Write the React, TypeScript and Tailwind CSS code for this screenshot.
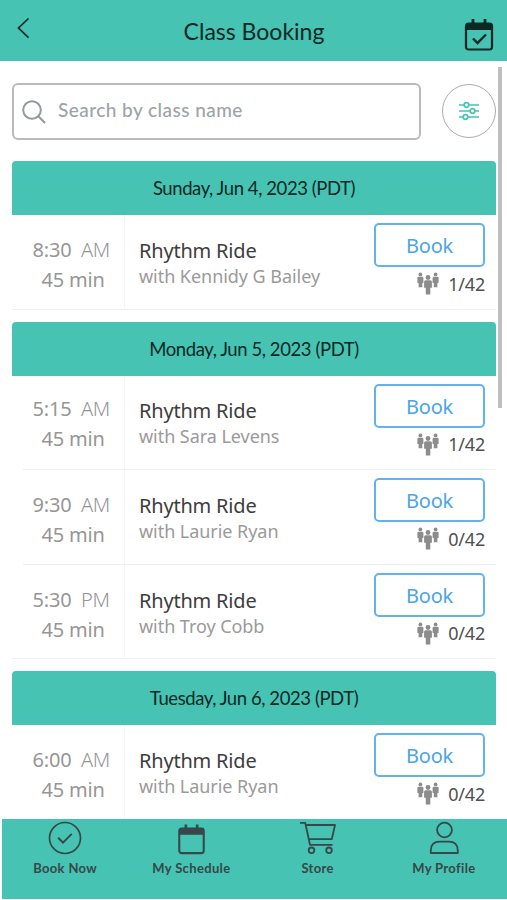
import { clsx } from "clsx";

type ClassItem = {
  time: string;
  period: string;
  teacher: string;
  spots: string;
};

type Day = {
  label: string;
  classes: ClassItem[];
};

const days: Day[] = [
  {
    label: "Sunday, Jun 4, 2023 (PDT)",
    classes: [{ time: "8:30", period: "AM", teacher: "Kennidy G Bailey", spots: "1/42" }],
  },
  {
    label: "Monday, Jun 5, 2023 (PDT)",
    classes: [
      { time: "5:15", period: "AM", teacher: "Sara Levens", spots: "1/42" },
      { time: "9:30", period: "AM", teacher: "Laurie Ryan", spots: "0/42" },
      { time: "5:30", period: "PM", teacher: "Troy Cobb", spots: "0/42" },
    ],
  },
  {
    label: "Tuesday, Jun 6, 2023 (PDT)",
    classes: [{ time: "6:00", period: "AM", teacher: "Laurie Ryan", spots: "0/42" }],
  },
];

function CalendarIcon({ checked = false, className }: { checked?: boolean; className?: string }) {
  return (
    <svg viewBox="0 0 30 34" className={className} fill="none" stroke="currentColor">
      <rect x="2" y="6" width="26" height="26" rx="2.5" strokeWidth="2.2" />
      <path d="M2 6h26v6.5H2z" fill="currentColor" stroke="none" />
      <path d="M9 1.5v6M21 1.5v6" strokeWidth="2.8" />
      {checked && <path d="M9 21l4.5 4.5 8.5-8.5" strokeWidth="2.4" />}
    </svg>
  );
}

function PeopleIcon() {
  return (
    <svg viewBox="0 0 22 23" className="h-[23px] w-[22px]" fill="#8c8c8c">
      <circle cx="3.4" cy="2.4" r="1.9" />
      <path d="M.4 6q0-1.3 1.3-1.3h3.4q1.3 0 1.3 1.3v5H5.3v4.2H1.6V11H.4z" />
      <circle cx="18.6" cy="2.4" r="1.9" />
      <path d="M15.6 6q0-1.3 1.3-1.3h3.4q1.3 0 1.3 1.3v5h-1.2v4.2h-3.6V11h-1.2z" />
      <circle cx="11" cy="5.5" r="2.4" />
      <path d="M7.1 9.8q0-1.5 1.5-1.5h4.8q1.5 0 1.5 1.5v6h-1.6v6.6H8.8v-6.6H7.1z" />
    </svg>
  );
}

function ClassRow({ item, tight, last }: { item: ClassItem; tight: boolean; last: boolean }) {
  return (
    <div className="relative flex h-[94.6px] font-['Noto_Sans','Open_Sans',sans-serif]">
      <div
        className={clsx(
          "w-[113px] border-r border-[#f4f5f6] text-[20px] leading-[30px] text-[#969696]",
          tight ? "pt-[18.5px]" : "pt-[20px]",
        )}
      >
        <div className="flex pl-[20.5px]">
          <span className="w-[48.5px] tracking-[-0.2px]">{item.time}</span>
          <span className="font-light tracking-[-0.3px] text-[#949494]">{item.period}</span>
        </div>
        <div className="pl-[29.5px] tracking-[-0.2px]">45 min</div>
      </div>
      <div className={clsx("flex-1 pl-[14px] whitespace-nowrap", tight ? "pt-[22px]" : "pt-[23px]")}>
        <div className="text-[20px] leading-[26px] tracking-[-0.2px] text-[#3d3d3d]">Rhythm Ride</div>
        <div className="text-[18px] leading-[24px] tracking-[-0.05px] text-[#9a9a9a]">with {item.teacher}</div>
      </div>
      <div className="mr-[11px] w-[111px] pt-[8px]">
        <button className="block h-[44px] w-full rounded-[5px] border-2 border-[#62b2ec] pt-[1px] text-[20px] leading-[39px] tracking-[-0.2px] text-[#4ba5e5]">
          Book
        </button>
        <div className="mt-[3.5px] flex items-center justify-end gap-[9px] text-[18px] leading-[26px] text-[#505050]">
          <PeopleIcon />
          <span className="tracking-[-0.2px]">{item.spots}</span>
        </div>
      </div>
      <div className={clsx("absolute right-0 bottom-0 h-px bg-[#eceeef]", last ? "left-0" : "left-[11px]")} />
    </div>
  );
}

const navItems = [
  {
    label: "Book Now",
    icon: (
      <svg viewBox="0 0 34 34" className="h-[34px] w-[34px]" fill="none" stroke="currentColor" strokeWidth="1.7">
        <circle cx="17" cy="17" r="15.5" />
        <path d="M10.2 16.8l4.8 4.8 8.7-8.7" strokeWidth="2" />
      </svg>
    ),
  },
  { label: "My Schedule", icon: <CalendarIcon className="mt-[2px] h-[32px] w-[29px]" /> },
  {
    label: "Store",
    icon: (
      <svg viewBox="0 0 38 34" className="h-[34px] w-[38px]" fill="none" stroke="currentColor" strokeWidth="1.8">
        <path d="M1 1.8h5.2L11 23.8h22.5M7 4h29l-3.2 14.2H10" strokeLinejoin="round" />
        <circle cx="12.5" cy="29.3" r="2.8" />
        <circle cx="30" cy="29.3" r="2.8" />
      </svg>
    ),
  },
  {
    label: "My Profile",
    icon: (
      <svg viewBox="0 0 30 34" className="h-[34px] w-[30px]" fill="none" stroke="currentColor" strokeWidth="1.8">
        <circle cx="15.5" cy="9" r="7.4" />
        <path d="M1.8 32v-2.5q0-8.8 9-8.8h9q9 0 9 8.8V32z" strokeLinejoin="round" />
      </svg>
    ),
  },
];

export default function App() {
  return (
    <div className="relative flex h-[900px] w-[507px] flex-col overflow-hidden bg-white">
      <header className="flex h-[61px] shrink-0 items-start justify-between bg-[#46c3b3] pr-[13px] pl-[16px] text-[#0b2825]">
        <svg viewBox="0 0 14 22" className="mt-[17px] h-[22px] w-[14px]" fill="none" stroke="currentColor" strokeWidth="1.7">
          <path d="M12.5 1.5L2.5 11l10 9.7" />
        </svg>
        <h1 className="mt-[15px] pl-[14px] font-['Lato',sans-serif] text-[23px] leading-[32px]">Class Booking</h1>
        <CalendarIcon checked className="mt-[17px] h-[35px] w-[30px]" />
      </header>

      <main className="h-[758px] shrink-0 overflow-hidden pr-[11px] pl-[12px]">
        <div className="flex h-[100px] justify-between pt-[22px]">
          <div className="flex h-[57px] w-[409px] items-center rounded-[6px] border-2 border-[#b8bbbd] pl-[8px]">
            <svg viewBox="0 0 24 24" className="h-[24px] w-[24px]" fill="none" stroke="#929a9e" strokeWidth="2">
              <circle cx="10" cy="10" r="8.8" />
              <path d="M16.3 16.3l6.7 6.7" />
            </svg>
            <span className="mb-[2px] ml-[12px] font-['Lato',sans-serif] text-[19px] font-medium tracking-[0.45px] text-[#9da3a7]">
              Search by class name
            </span>
          </div>
          <div className="mt-[1px] flex h-[54px] w-[54px] items-center justify-center rounded-full border-[1.5px] border-[#aaadaf]">
            <svg viewBox="0 0 20 20" className="h-[20px] w-[20px]" fill="none" stroke="#46c3b3" strokeWidth="1.7">
              <path d="M0 4h5M10 4h10M0 10h11M16 10h4M0 16h4M9 16h11" />
              <circle cx="7.5" cy="4" r="2.3" />
              <circle cx="13.5" cy="10" r="2.3" />
              <circle cx="6.5" cy="16" r="2.3" />
            </svg>
          </div>
        </div>

        {days.map((day) => (
          <section key={day.label} className="mb-[12px]">
            <h2 className="h-[54px] rounded-t-[4px] bg-[#46c3b3] text-center font-['Lato',sans-serif] text-[18.5px] leading-[54px] tracking-[-0.42px] text-[#0b2825]">
              {day.label}
            </h2>
            {day.classes.map((item, i) => (
              <ClassRow
                key={item.time}
                item={item}
                tight={i === 0 && day.classes.length > 1}
                last={i === day.classes.length - 1}
              />
            ))}
          </section>
        ))}
      </main>

      <div className="absolute top-[67px] left-[498px] h-[341px] w-[4px] bg-[#bfbfbf]" />

      <nav className="mb-px ml-[2px] grid h-[80px] shrink-0 grid-cols-4 bg-[#46c3b3] pt-[2px] text-[#37474a]">
        {navItems.map(({ label, icon }) => (
          <div key={label} className="flex flex-col items-center">
            <div className="h-[37px]">{icon}</div>
            <span className="font-['Lato',sans-serif] text-[13px] leading-[20px] font-bold tracking-[0.35px]">{label}</span>
          </div>
        ))}
      </nav>
    </div>
  );
}
